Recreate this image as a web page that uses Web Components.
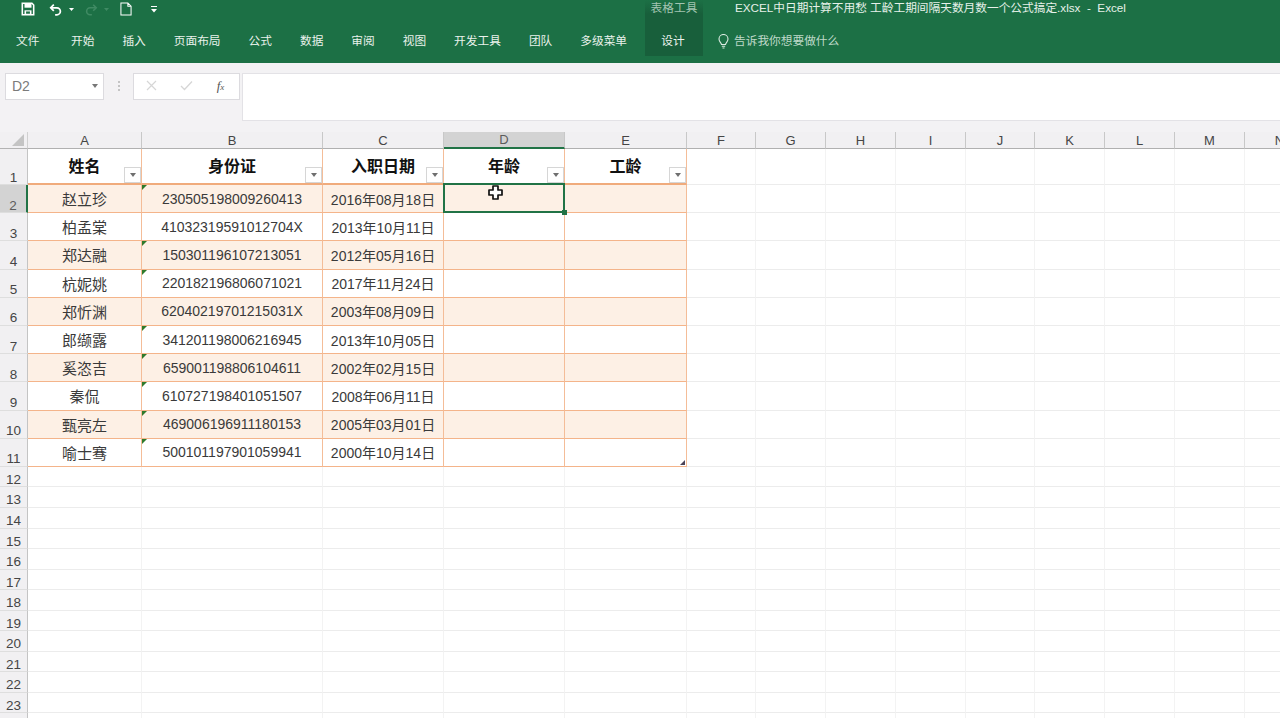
<!DOCTYPE html>
<html lang="zh"><head><meta charset="utf-8"><title>Excel</title>
<style>
html,body{margin:0;height:718px;overflow:hidden;background:#fff;font-family:"Liberation Sans","Noto Sans CJK SC",sans-serif}
body{display:flex;flex-direction:column}
</style></head><body>
<x-ribbon></x-ribbon>
<x-formula-bar></x-formula-bar>
<x-sheet></x-sheet>
<script>
const FONT='"Liberation Sans","Noto Sans CJK SC",sans-serif';
class Base extends HTMLElement{
  constructor(){super();this.attachShadow({mode:'open'});}
}
class XTab extends Base{
  connectedCallback(){this.shadowRoot.innerHTML=`<style>:host{display:block;padding:0 14px;font:11.7px/1 ${FONT};color:#eaf2ec;white-space:nowrap}</style><slot></slot>`;}
}
customElements.define('x-tab',XTab);
class XRibbon extends Base{
  connectedCallback(){
    const tabs=['开始','插入','页面布局','公式','数据','审阅','视图','开发工具','团队','多级菜单'];
    this.shadowRoot.innerHTML=`<style>
    :host{display:flex;flex:none;height:63px;background:#1c7045;color:#fff;font-family:${FONT};box-sizing:border-box;padding-bottom:7px}
    .left{width:645px;flex:none;display:flex;flex-direction:column}
    .qat{height:18px;display:flex;align-items:center;padding-left:21px;flex:none}
    .qat svg{display:block;flex:none}
    .tabs{flex:1;display:flex;align-items:center;padding-top:8px;box-sizing:border-box}
    .file{font:11.7px/1 ${FONT};color:#eaf2ec;padding-left:16px;width:41px;flex:none}
    .ctx{width:58px;flex:none;display:flex;flex-direction:column;align-items:center;background:linear-gradient(#1c7045 0,#185f3b 14px,#185f3b 100%)}
    .ctx .lab{height:15px;font:11.7px/15px ${FONT};color:#a3c4b1;white-space:nowrap}
    .ctx .des{flex:1;display:flex;align-items:center;font:11.7px/1 ${FONT};color:#eef5f0;padding-top:11px;box-sizing:border-box;margin-left:-2px}
    .right{flex:1;display:flex;flex-direction:column;min-width:0}
    .title{height:15px;padding-left:32px;font:11.7px/15px ${FONT};color:#e6f0e9;white-space:pre}
    .tell{flex:1;display:flex;align-items:center;padding:11px 0 0 15px;gap:5px;font:11.7px/1 ${FONT};color:#bfd9c9;box-sizing:border-box}
    </style>
    <div class="left">
      <div class="qat">
        <svg width="14" height="14" viewBox="0 0 16 16" style="margin-right:14px"><path d="M1.500 1.500h11l2 2v11h-13z" fill="none" stroke="#fff" stroke-width="1.800"/><rect x="4" y="2" width="8" height="4.500" fill="#fff"/><rect x="4" y="9.500" width="8" height="5" fill="#fff"/><rect x="5.800" y="10.800" width="4.400" height="2.600" fill="#1c7045"/></svg>
        <svg width="14" height="13" viewBox="0 0 16 14"><path d="M5.500 1.500 2 5l3.500 3.500" fill="none" stroke="#fff" stroke-width="2"/><path d="M2.500 5H9a4 4 0 0 1 0 8H7" fill="none" stroke="#fff" stroke-width="2"/></svg>
        <svg width="5" height="3" viewBox="0 0 5 3" style="margin:0 10px 0 6px"><path d="M0 0h5L2.500 3z" fill="#fff"/></svg>
        <svg width="14" height="13" viewBox="0 0 16 14"><path d="M10.500 1.500 14 5l-3.500 3.500" fill="none" stroke="#3f8a63" stroke-width="1.800"/><path d="M13.500 5H7a4 4 0 0 0 0 8h2" fill="none" stroke="#3f8a63" stroke-width="1.800"/></svg>
        <svg width="5" height="3" viewBox="0 0 5 3" style="margin:0 11px 0 6px"><path d="M0 0h5L2.500 3z" fill="#3f8a63"/></svg>
        <svg width="12" height="14" viewBox="0 0 13 15" style="margin-right:19px"><path d="M1 1h7.500L12 4.500V14H1z M8.500 1v3.500H12" fill="none" stroke="#fff" stroke-width="1.100"/></svg>
        <svg width="6" height="7" viewBox="0 0 6 7"><path d="M0 .5h6" stroke="#fff"/><path d="M0 3h6L3 6.500z" fill="#fff"/></svg>
      </div>
      <div class="tabs"><span class="file">文件</span>${tabs.map(t=>`<x-tab>${t}</x-tab>`).join('')}</div>
    </div>
    <div class="ctx"><div class="lab">表格工具</div><div class="des">设计</div></div>
    <div class="right">
      <div class="title">EXCEL中日期计算不用愁 工龄工期间隔天数月数一个公式搞定.xlsx  -  Excel</div>
      <div class="tell"><svg width="11" height="15" viewBox="0 0 11 15"><path d="M3.500 10.500C3 8.500 1 7.500 1 5a4.500 4.500 0 0 1 9 0c0 2.500-2 3.500-2.500 5.500z" fill="none" stroke="#dcebe2" stroke-width="1.100"/><path d="M3.800 12.300h3.400M4.500 14h2" stroke="#dcebe2" stroke-width="1.100"/></svg><span>告诉我你想要做什么</span></div>
    </div>`;
  }
}
customElements.define('x-ribbon',XRibbon);
class XFormulaBar extends Base{
  connectedCallback(){
    this.shadowRoot.innerHTML=`<style>
    :host{display:flex;flex:none;height:69px;background:#f3f2f4;box-sizing:border-box;padding:10px 0 11px 5px;align-items:flex-start;font-family:${FONT}}
    .box{background:#fff;border:1px solid #dcdbdf;box-sizing:border-box;height:27px}
    .name{width:99px;display:flex;align-items:center;justify-content:space-between;padding:0 5px 2px 6px;font-size:14px;color:#7b7b7b}
    .name i{width:0;height:0;border:3.500px solid transparent;border-top:4px solid #777;border-bottom:0}
    .dots{width:29px;flex:none;display:flex;flex-direction:column;align-items:center;gap:2px;padding-top:8px}
    .dots b{width:2px;height:2px;background:#c4c4c4}
    .fx{width:107px;display:flex;align-items:center;justify-content:space-around;padding:0 3px 2px 0;box-sizing:border-box}
    .fx em{font:italic 13px "Liberation Serif",serif;color:#555}
    .fx em sub{font-size:9px;vertical-align:baseline}
    .input{flex:1;height:48px;margin-left:2px;background:#fff;border:1px solid #e3e2e6;border-right:0;box-sizing:border-box}
    </style>
    <div class="box name"><span>D2</span><i></i></div>
    <div class="dots"><b></b><b></b><b></b></div>
    <div class="box fx">
      <svg width="11" height="11" viewBox="0 0 11 11"><path d="M1 1l9 9M10 1l-9 9" stroke="#d6d6d6" stroke-width="1.200"/></svg>
      <svg width="13" height="11" viewBox="0 0 13 11"><path d="M1 6l3.500 3.500L12 1.500" fill="none" stroke="#d6d6d6" stroke-width="1.300"/></svg>
      <em>f<sub>x</sub></em>
    </div>
    <div class="input"></div>`;
  }
}
customElements.define('x-formula-bar',XFormulaBar);
const ROWS=[
['赵立珍','230505198009260413','2016年08月18日',1],
['柏孟棠','41032319591012704X','2013年10月11日',0],
['郑达融','150301196107213051','2012年05月16日',1],
['杭妮姚','220182196806071021','2017年11月24日',1],
['郑忻渊','62040219701215031X','2003年08月09日',0],
['郎缬露','341201198006216945','2013年10月05日',1],
['奚恣吉','659001198806104611','2002年02月15日',1],
['秦侃','610727198401051507','2008年06月11日',1],
['甄亮左','469006196911180153','2005年03月01日',1],
['喻士骞','500101197901059941','2000年10月14日',1]];
const COLS='ABCDEFGHIJKLMN'.split('');
class XSheet extends Base{
  connectedCallback(){
    let h='<div class="c corner"><svg width="12" height="12" viewBox="0 0 12 12"><path d="M12 0v12H0z" fill="#c4c4c4"/></svg></div>';
    COLS.forEach(c=>h+=`<div class="c ch${c==='D'?' sel':''}">${c}</div>`);
    h+='<div class="c rh">1</div>';
    ['姓名','身份证','入职日期','年龄','工龄'].forEach(t=>h+=`<div class="c th">${t}<x-filter></x-filter></div>`);
    const blank=(n)=>{let s='';for(let i=0;i<n;i++)s+='<div class="c g"></div>';return s;};
    h+=blank(9);
    ROWS.forEach((r,i)=>{
      const band=i%2===0?' band':'';
      h+=`<div class="c rh${i===0?' rsel':''}">${i+2}</div>`;
      h+=`<div class="c td name${band}">${r[0]}</div>`;
      h+=`<div class="c td${band}">${r[1]}${r[3]?'<i class="tri"></i>':''}</div>`;
      h+=`<div class="c td${band}">${r[2]}</div>`;
      if(i===0){
        h+=`<div class="c td${band}"><div class="selbox"><i></i></div><svg class="cur" width="15" height="15" viewBox="0 0 15 15"><path d="M5 1h5v4h4v5h-4v4H5v-4H1V5h4z" fill="#fff" stroke="#111" stroke-width="1.700" stroke-linejoin="round"/></svg></div>`;
      } else h+=`<div class="c td${band}"></div>`;
      h+=`<div class="c td${band}">${i===9?'<i class="rs"></i>':''}</div>`;
      h+=blank(9);
    });
    for(let n=12;n<=23;n++){h+=`<div class="c rh">${n}</div>`+blank(14);}
    h+=`<div class="c rh"></div>`+blank(14);
    this.shadowRoot.innerHTML=`<style>
    :host{display:grid;flex:1;min-height:0;overflow:hidden;align-content:start;font-family:${FONT};
      grid-template-columns:28px 114px 181px 121px 121px 122px 69px 70px 70px 70px 69px 70px 70px 70px 70px;
      grid-template-rows:17px 36px repeat(10,28.2px) repeat(13,20.55px);background:#fff}
    .c{box-sizing:border-box;position:relative;display:flex;align-items:center;justify-content:center;min-width:0}
    .corner{background:#f1f0f2;border-right:1px solid #d0d0d0;border-bottom:1px solid #b3b3b3;justify-content:flex-end;align-items:flex-end;padding:0 3px 2px 0}
    .ch{background:#f1f0f2;border-right:1px solid #c8c8c8;border-bottom:1px solid #b0b0b0;font-size:13px;color:#454545}
    .ch.sel{background:#d3d3d3;border-bottom:2px solid #217346;color:#5c5c5c}
    .rh{background:#f1f0f2;border-right:1px solid #c4c4c4;border-bottom:1px solid #dedede;font-size:13.500px;line-height:1;color:#454545;align-items:flex-end}
    .rsel{background:#d3d3d3;border-right:2px solid #217346;color:#5c5c5c}
    .th{border-right:1px solid #f4bd98;border-bottom:2px solid #f0ab7c;font:bold 16px/1 ${FONT};color:#111;align-items:flex-start;padding-top:10px}
    .td{border-right:1px solid #f4bd98;border-bottom:1px solid #f4b48a;font-size:14px;color:#3a3a3a;white-space:nowrap}
    .td.name{font-size:15px}
    .td.band{background:#fdf0e5}
    .g{border-right:1px solid #f3f3f3;border-bottom:1px solid #ececec}
    .tri{position:absolute;left:0;top:0;width:0;height:0;border-top:5px solid #2f7a2c;border-right:5px solid transparent}
    .selbox{position:absolute;left:-1px;right:-1px;top:-2px;bottom:-1px;border:2px solid #217346;box-sizing:border-box;z-index:2}
    .selbox i{position:absolute;right:-4px;bottom:-4px;width:5px;height:5px;background:#217346}
    .cur{position:absolute;left:44px;top:0;z-index:3}
    .rs{position:absolute;right:1px;bottom:1px;width:0;height:0;border-bottom:5px solid #4a4358;border-left:5px solid transparent}
    </style>${h}`;
  }
}
class XFilter extends Base{
  connectedCallback(){
    this.shadowRoot.innerHTML=`<style>
    :host{position:absolute;right:0;bottom:0;width:17px;height:16px;box-sizing:border-box;background:#fff;border:1px solid #d6d6d6;display:flex;align-items:center;justify-content:center}
    i{width:0;height:0;border:3.500px solid transparent;border-top:4px solid #6f6f6f;border-bottom:0}
    </style><i></i>`;
  }
}
customElements.define('x-filter',XFilter);
customElements.define('x-sheet',XSheet);
</script>
</body></html>
